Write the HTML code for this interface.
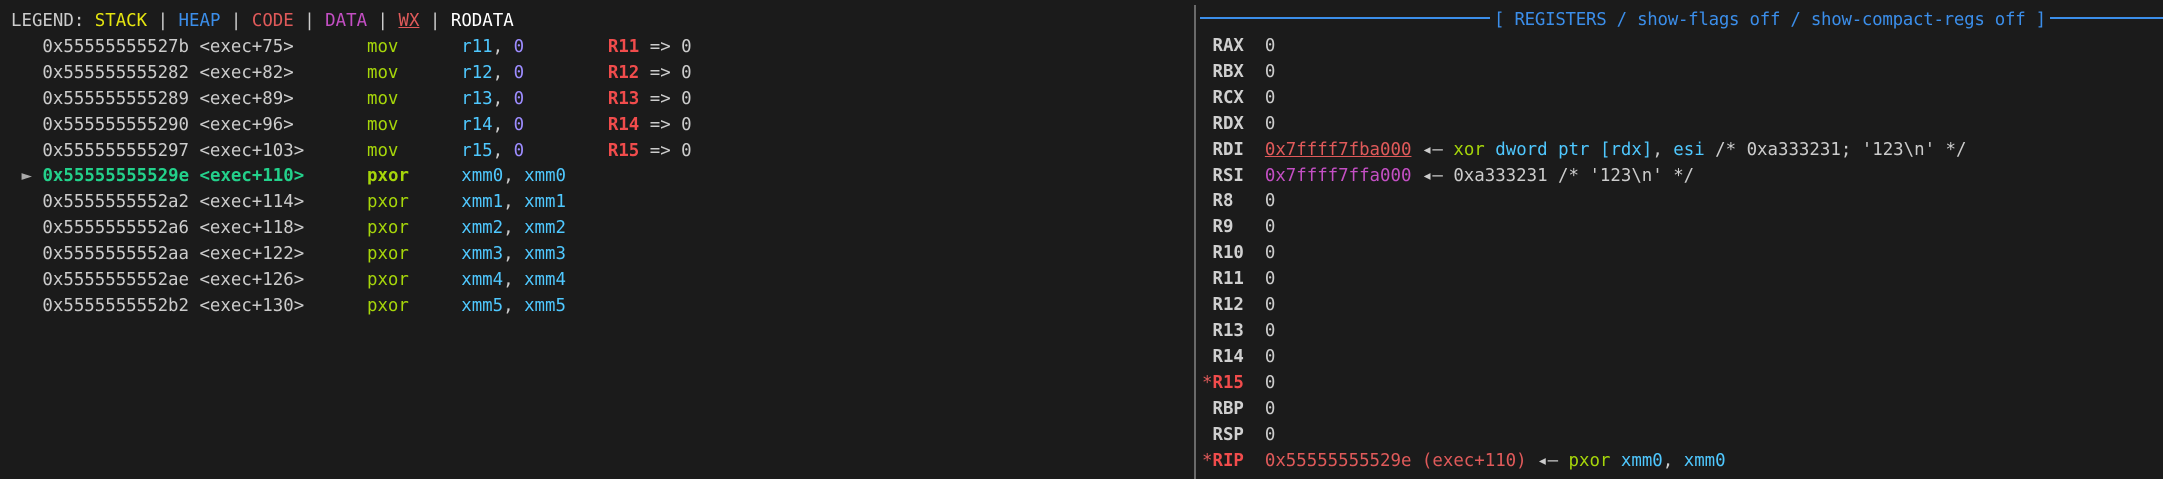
<!DOCTYPE html>
<html><head><meta charset="utf-8"><style>
html,body{margin:0;padding:0;background:#1b1b1b;width:2163px;height:479px;overflow:hidden}
pre{position:absolute;margin:0;font-family:"DejaVu Sans Mono","Liberation Mono",monospace;font-size:17.4px;line-height:25.9px;color:#cccccc;white-space:pre}
.y{color:#e5e510}.b{color:#3b8eea}.r{color:#e05a5a}.m{color:#c44fc4}.w{color:#ffffff}
.g{color:#a6d60a}.c{color:#4fc8ff}.p{color:#9d8cff}.R{color:#f14c4c;font-weight:bold}
.cur{color:#23d18b;font-weight:bold}.B{font-weight:bold;color:#d0d0d0}.u{text-decoration:underline}
.gy{color:#aaaaaa}
</style></head><body>
<pre style="left:11px;top:9px">LEGEND: <span class="y">STACK</span> | <span class="b">HEAP</span> | <span class="r">CODE</span> | <span class="m">DATA</span> | <span class="r u">WX</span> | <span class="w">RODATA</span>
   0x55555555527b &lt;exec+75&gt;       <span class="g">mov</span>      <span class="c">r11</span>, <span class="p">0</span>        <span class="R">R11</span> =&gt; 0
   0x555555555282 &lt;exec+82&gt;       <span class="g">mov</span>      <span class="c">r12</span>, <span class="p">0</span>        <span class="R">R12</span> =&gt; 0
   0x555555555289 &lt;exec+89&gt;       <span class="g">mov</span>      <span class="c">r13</span>, <span class="p">0</span>        <span class="R">R13</span> =&gt; 0
   0x555555555290 &lt;exec+96&gt;       <span class="g">mov</span>      <span class="c">r14</span>, <span class="p">0</span>        <span class="R">R14</span> =&gt; 0
   0x555555555297 &lt;exec+103&gt;      <span class="g">mov</span>      <span class="c">r15</span>, <span class="p">0</span>        <span class="R">R15</span> =&gt; 0
 <span class="gy">►</span> <span class="cur">0x55555555529e &lt;exec+110&gt;</span>      <span class="g" style="font-weight:bold">pxor</span>     <span class="c">xmm0</span>, <span class="c">xmm0</span>
   0x5555555552a2 &lt;exec+114&gt;      <span class="g">pxor</span>     <span class="c">xmm1</span>, <span class="c">xmm1</span>
   0x5555555552a6 &lt;exec+118&gt;      <span class="g">pxor</span>     <span class="c">xmm2</span>, <span class="c">xmm2</span>
   0x5555555552aa &lt;exec+122&gt;      <span class="g">pxor</span>     <span class="c">xmm3</span>, <span class="c">xmm3</span>
   0x5555555552ae &lt;exec+126&gt;      <span class="g">pxor</span>     <span class="c">xmm4</span>, <span class="c">xmm4</span>
   0x5555555552b2 &lt;exec+130&gt;      <span class="g">pxor</span>     <span class="c">xmm5</span>, <span class="c">xmm5</span></pre>
<div style="position:absolute;left:1194px;top:5px;width:2px;height:474px;background:#6a6a6a"></div>
<div style="position:absolute;left:1200px;top:17px;width:290px;height:2px;background:#3b8eea"></div>
<div style="position:absolute;left:2050px;top:17px;width:113px;height:2px;background:#3b8eea"></div>
<pre style="left:1494px;top:8px;color:#3b8eea;letter-spacing:-0.25px">[ REGISTERS / show-flags off / show-compact-regs off ]</pre>
<pre style="left:1202px;top:34px"> <span class="B">RAX</span>  0
 <span class="B">RBX</span>  0
 <span class="B">RCX</span>  0
 <span class="B">RDX</span>  0
 <span class="B">RDI</span>  <span class="r u">0x7ffff7fba000</span> ◂— <span class="g">xor</span> <span class="c">dword ptr</span> <span class="c">[rdx]</span>, <span class="c">esi</span> /* 0xa333231; '123\n' */
 <span class="B">RSI</span>  <span class="m">0x7ffff7ffa000</span> ◂— 0xa333231 /* '123\n' */
 <span class="B">R8 </span>  0
 <span class="B">R9 </span>  0
 <span class="B">R10</span>  0
 <span class="B">R11</span>  0
 <span class="B">R12</span>  0
 <span class="B">R13</span>  0
 <span class="B">R14</span>  0
<span class="r">*</span><span class="R">R15</span>  0
 <span class="B">RBP</span>  0
 <span class="B">RSP</span>  0
<span class="r">*</span><span class="R">RIP</span>  <span class="r">0x55555555529e (exec+110)</span> ◂— <span class="g">pxor</span> <span class="c">xmm0</span>, <span class="c">xmm0</span></pre>
</body></html>
